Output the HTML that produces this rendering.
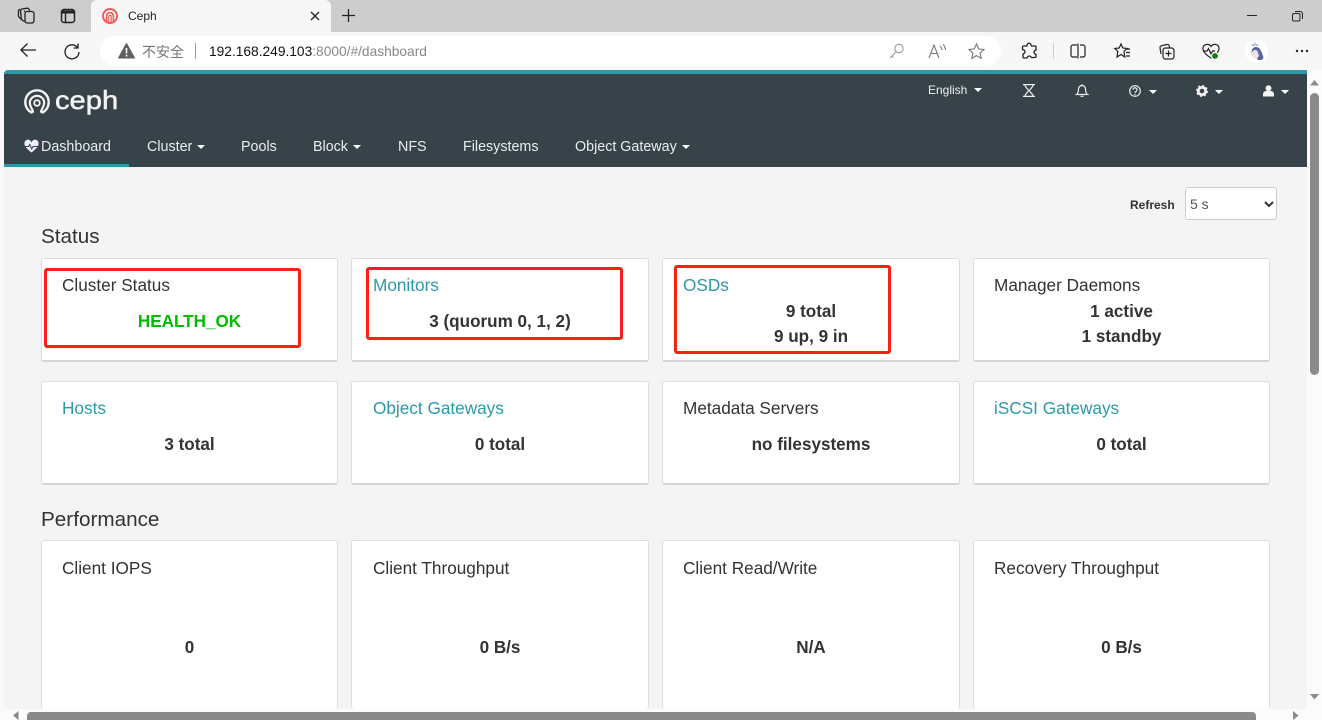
<!DOCTYPE html>
<html><head><meta charset="utf-8"><title>Ceph</title>
<style>
html,body{margin:0;padding:0;width:1322px;height:720px;overflow:hidden;background:#f9f9f9;font-family:"Liberation Sans","Noto Sans CJK SC",sans-serif;color:#333}
.a{position:absolute;white-space:nowrap}
svg{position:absolute;overflow:visible}
.card{position:absolute;width:295px;height:101px;background:#fff;border:1px solid #ddd;border-bottom:2px solid #d4d4d4;border-radius:3px;box-sizing:content-box}
.w{width:296px}
.t{position:absolute;font-size:17.2px;line-height:20px;white-space:nowrap;color:#333}
.l{color:#2b99a8}
.v{position:absolute;left:0;right:0;text-align:center;font-size:17.1px;font-weight:bold;line-height:20px;color:#333}
.nav{position:absolute;top:139px;font-size:14.3px;line-height:16px;color:#e8eef0;white-space:nowrap}
.car{display:inline-block;width:0;height:0;border-left:4px solid transparent;border-right:4px solid transparent;border-top:4px solid #fff;vertical-align:2px;margin-left:5px}
.red{position:absolute;border:3px solid #fb1f14;border-radius:3px;box-sizing:border-box}
</style></head><body>
<!-- browser chrome -->
<div class="a" style="left:0;top:0;width:1322px;height:32px;background:#cdcdcd"></div>
<div class="a" style="left:91px;top:0;width:240px;height:32px;background:#f7f7f7;border-radius:6px 6px 0 0"></div>
<div class="a" style="left:0;top:32px;width:1322px;height:38px;background:#f7f7f7"></div>
<svg style="left:0;top:0" width="91" height="32" fill="none" stroke="#222" stroke-width="1.3">
<rect x="25" y="11.500" width="9" height="11.500" rx="2.200"/><path d="M25 11.500l-1-.8M24.500 21.500l-2-1.200a2 2 0 0 1-1.200-1.800L20.500 11a2 2 0 0 1 1.500-2l5-.8a2 2 0 0 1 2 1l.8 1.500"/><path d="M21 19l-2-1.800a2 2 0 0 1-.6-1.700L18.500 11a2 2 0 0 1 1.500-1.800"/>
<rect x="61.500" y="9.500" width="13" height="13" rx="2.500" stroke-width="1.500"/><path d="M62 11h12v2H62z" fill="#222" stroke-width="1"/><path d="M65.500 13v9" stroke-width="1.400"/></svg>
<svg style="left:102px;top:8px" width="16" height="16" fill="none" stroke="#ef5c55"><circle cx="8" cy="8" r="7" stroke-width="2"/><path d="M4.600 14V8a3.400 3.400 0 0 1 6.800 0v6" stroke-width="1.600"/><path d="M6.800 14V8.500a1.200 1.200 0 0 1 2.400 0V14" stroke-width="1.200"/></svg>
<div class="a" style="left:128px;top:9px;font-size:12px;line-height:15px;color:#222">Ceph</div>
<svg style="left:310px;top:11px" width="10" height="10" stroke="#222" stroke-width="1.300"><path d="M1 1l8 8M9 1l-8 8"/></svg>
<svg style="left:341px;top:8px" width="15" height="15" stroke="#222" stroke-width="1.300"><path d="M7.500 1v13M1 7.500h13"/></svg>
<svg style="left:1246px;top:15px" width="12" height="2" stroke="#222"><path d="M1 .5h10"/></svg>
<svg style="left:1292px;top:11px" width="11" height="11" fill="none" stroke="#222"><rect x=".5" y="2.500" width="7.500" height="7.500" rx="1.500"/><path d="M3 .5h5a2.500 2.500 0 0 1 2.500 2.500v5"/></svg>
<svg style="left:19px;top:42px" width="18" height="16" fill="none" stroke="#222" stroke-width="1.300"><path d="M17 8H2M8.500 1.500L2 8l6.500 6.500"/></svg>
<svg style="left:64px;top:43px" width="16" height="16" fill="none" stroke="#222" stroke-width="1.300"><path d="M13.500 4.500A7 7 0 1 0 15 9"/><path d="M14 .5v4.500H9.500"/></svg>
<div class="a" style="left:100px;top:36px;width:901px;height:30px;background:#fff;border-radius:15px"></div>
<svg style="left:118px;top:43px" width="17" height="16"><path d="M8.500 .5L16.500 15H.5z" fill="#5f5f5f" stroke="#5f5f5f" stroke-linejoin="round"/><path d="M8.500 5v5.500M8.500 11.700v1.800" stroke="#fff" stroke-width="1.600"/></svg>
<div class="a" style="left:142px;top:44px;font-size:14px;line-height:16px;color:#777">不安全</div>
<div class="a" style="left:195px;top:43px;width:1px;height:16px;background:#999"></div>
<div class="a" style="left:209px;top:44px;font-size:13.750px;line-height:16px;color:#888"><span style="color:#111">192.168.249.103</span>:8000/#/dashboard</div>
<svg style="left:888px;top:43px" width="17" height="16" fill="none" stroke="#999" stroke-width="1.100"><circle cx="11" cy="5.500" r="4.200"/><path d="M8 9L2 15M4 13l1.500 1.500"/></svg>
<svg style="left:928px;top:43px" width="19" height="16" fill="none" stroke="#777" stroke-width="1.100"><path d="M1 15L6 2l5 13M3 10.500h6M12 3a5 5 0 0 1 1.800 4M15 1.500a8 8 0 0 1 2.500 5.500"/></svg>
<svg style="left:968px;top:43px" width="17" height="16" fill="none" stroke="#777" stroke-width="1.100"><path d="M8.500 1l2.200 4.900 5.300.6-3.900 3.600 1.100 5.200-4.700-2.700-4.700 2.700 1.100-5.200L1 6.500l5.300-.6z"/></svg>
<svg style="left:1021px;top:43px" width="17" height="16" fill="none" stroke="#222" stroke-width="1.300"><path d="M6 2.500a2 2 0 0 1 4-.5l.5 1h3.500a1 1 0 0 1 1 1v3l-1 .5a2 2 0 0 0 0 3.500l1 .5v2a1 1 0 0 1-1 1H10.500l-.5-.5a2 2 0 0 0-3.500 0L6 15H3a1 1 0 0 1-1-1v-3l1-.5a2 2 0 0 0 0-3.500L1.500 6.500V4a1 1 0 0 1 1-1H6z"/></svg>
<div class="a" style="left:1053px;top:43px;width:1px;height:16px;background:#ccc"></div>
<svg style="left:1070px;top:43px" width="16" height="16" fill="none" stroke="#222" stroke-width="1.200"><path d="M7 2H3a2 2 0 0 0-2 2v8a2 2 0 0 0 2 2h4M10 2h3a2 2 0 0 1 2 2v8a2 2 0 0 1-2 2h-3M8 .5v15"/></svg>
<svg style="left:1114px;top:43px" width="17" height="16" fill="none" stroke="#222" stroke-width="1.200"><path d="M7 1l1.800 4 4.200.5-3 3 .8 5.500L7 11.500 3 14l.8-5.500-3-3L5.200 5zM12 6h4M12 9.500h4M12 13h4"/></svg>
<svg style="left:1158px;top:43px" width="17" height="17" fill="none" stroke="#222" stroke-width="1.200"><path d="M3 11l-1-6a2 2 0 0 1 1.600-2.300L9 1.500a2 2 0 0 1 2.300 1.500L11.500 4.500"/><rect x="5" y="5" width="11" height="11" rx="2.500" fill="#f7f7f7"/><path d="M10.500 7.500v6M7.500 10.500h6"/></svg>
<svg style="left:1202px;top:43px" width="18" height="17" fill="none" stroke="#222" stroke-width="1.200"><path d="M9 3.500C7 0 1 1 1 5.500 1 9 5 12.500 9 15c4-2.500 8-6 8-9.500C17 1 11 0 9 3.500z"/><path d="M1 8h4l1.500-2.500L9 11l1.500-3H13"/><circle cx="13" cy="13" r="3.500" fill="#107c10" stroke="#f7f7f7"/></svg>
<div class="a" style="left:1245px;top:40px;width:23px;height:23px;border-radius:50%;background:#fff"></div>
<svg style="left:1248px;top:42px" width="17" height="19"><path d="M4 13.500C3 9 4 5 8 5s6 5 7.500 11l-2 2H10l-2-4z" fill="#56659c"/><ellipse cx="7.500" cy="12" rx="3.800" ry="4.500" fill="#f1e3e4"/><path d="M4 2l2 2M7 1v2.500M9.500 2L8.500 4" stroke="#7a88b5"/><path d="M5 8.500c1-1.500 4-1.500 5 .5l1 4" stroke="#56659c" fill="none"/></svg>
<svg style="left:1295px;top:49px" width="14" height="4" fill="#222"><circle cx="2" cy="2" r="1.200"/><circle cx="7" cy="2" r="1.200"/><circle cx="12" cy="2" r="1.200"/></svg>

<!-- page -->
<div class="a" style="left:4px;top:74px;width:1303px;height:635px;background:#f4f4f4"></div>
<div class="a" style="left:4px;top:70px;width:1303px;height:97px;background:#374249;border-top:4px solid #2b99a8;box-sizing:border-box;border-radius:4px 0 0 0"></div>
<div class="a" style="left:4px;top:164px;width:125px;height:3px;background:#2b99a8"></div>
<svg style="left:24px;top:89px" width="26" height="25" fill="none" stroke="#f4f4f4" stroke-linecap="round">
<path d="M7.500 23.500C3.500 21.500 1.300 17.500 1.300 13a11.700 11.700 0 0 1 23.400 0c0 4.500-2.200 8.500-6.200 10.500" stroke-width="2.400"/>
<path d="M9 22.800c0-2-2.800-4.500-3.200-8.800a7.200 7.200 0 0 1 14.400 0c-.4 4.300-3.200 6.800-3.200 8.800" stroke-width="2.200"/>
<circle cx="13" cy="14" r="2.800" stroke-width="1.800"/></svg>
<div class="a" style="left:55px;top:84px;font-size:26px;line-height:32px;color:#f4f4f4;-webkit-text-stroke:.5px #f4f4f4;transform:scaleX(1.12);transform-origin:left">ceph</div>

<svg style="left:24px;top:140px" width="15" height="13"><path d="M7.500 12.500C3 9 .5 6.500.5 4A3.400 3.400 0 0 1 7.500 2.500 3.400 3.400 0 0 1 14.500 4C14.500 6.500 12 9 7.500 12.500z" fill="#eef"/><path d="M0 6.500h4.500l1.200-2 2 4.500 1.500-2.500H15" fill="none" stroke="#374249" stroke-width="1"/></svg>
<div class="nav" style="left:41px">Dashboard</div>
<div class="nav" style="left:147px">Cluster<span class="car"></span></div>
<div class="nav" style="left:241px">Pools</div>
<div class="nav" style="left:313px">Block<span class="car"></span></div>
<div class="nav" style="left:398px">NFS</div>
<div class="nav" style="left:463px">Filesystems</div>
<div class="nav" style="left:575px">Object Gateway<span class="car"></span></div>

<div class="a" style="left:928px;top:83px;font-size:12px;line-height:15px;color:#f0f0f0">English<span class="car" style="margin-left:7px"></span></div>
<svg style="left:1023px;top:84px" width="12" height="13" fill="none" stroke="#f0f0f0" stroke-width="1.200"><path d="M0 .6h12M0 12.400h12M2 .6c0 3 3 4 3.500 6C5 8.500 2 9.500 2 12.400M10 .6c0 3-3 4-3.500 6 .5 2 3.500 3 3.500 5.800"/></svg>
<svg style="left:1076px;top:84px" width="12" height="13" fill="none" stroke="#f0f0f0" stroke-width="1.200"><path d="M.5 10.500c1.500-1 2-2.500 2-5.500a3.500 3.500 0 0 1 7 0c0 3 .5 4.500 2 5.500z"/><path d="M4.500 12.300h3M6 .2v1"/></svg>
<svg style="left:1129px;top:85px" width="12" height="12" fill="none" stroke="#f0f0f0" stroke-width="1.200"><circle cx="6" cy="6" r="5.300"/><path d="M4 4.700a2 2 0 1 1 3 1.800c-.7.400-1 .8-1 1.500M6 9v1.200"/></svg>
<span class="car a" style="left:1149px;top:90px;margin:0"></span>
<svg style="left:1196px;top:85px" width="12" height="12"><circle cx="6" cy="6" r="3.700" fill="none" stroke="#f0f0f0" stroke-width="2.800"/><circle cx="6" cy="6" r="5.200" fill="none" stroke="#f0f0f0" stroke-width="1.600" stroke-dasharray="2 2.080"/></svg>
<span class="car a" style="left:1215px;top:90px;margin:0"></span>
<svg style="left:1263px;top:85px" width="11" height="12" fill="#f4f4f4"><circle cx="5.500" cy="3.200" r="3"/><path d="M0 11.500V9a3 3 0 0 1 3-3h5a3 3 0 0 1 3 3v2.500z"/></svg>
<span class="car a" style="left:1281px;top:90px;margin:0"></span>

<div class="a" style="left:1130px;top:198px;font-size:12px;line-height:15px;font-weight:bold;color:#333">Refresh</div>
<div class="a" style="left:1185px;top:187px;width:92px;height:33px;background:#fff;border:1px solid #ccc;border-radius:3px;box-sizing:border-box"></div>
<div class="a" style="left:1190px;top:196px;font-size:14px;line-height:16px;color:#555">5 s</div>
<svg style="left:1264px;top:201px" width="10" height="7" fill="none" stroke="#333" stroke-width="2"><path d="M1 1l4 4 4-4"/></svg>

<div class="a" style="left:41px;top:225px;font-size:20.700px;line-height:24px;color:#333">Status</div>
<div class="a" style="left:41px;top:508px;font-size:20.700px;line-height:24px;color:#333">Performance</div>

<div class="card" style="left:41px;top:258px"><div class="t" style="left:20px;top:16px">Cluster Status</div><div class="v" style="top:53px;color:#00bb00">HEALTH_OK</div></div>
<div class="card w" style="left:351px;top:258px"><div class="t l" style="left:21px;top:16px">Monitors</div><div class="v" style="top:53px">3 (quorum 0, 1, 2)</div></div>
<div class="card w" style="left:662px;top:258px"><div class="t l" style="left:20px;top:16px">OSDs</div><div class="v" style="top:43px">9 total</div><div class="v" style="top:68px">9 up, 9 in</div></div>
<div class="card" style="left:973px;top:258px"><div class="t" style="left:20px;top:16px">Manager Daemons</div><div class="v" style="top:43px">1 active</div><div class="v" style="top:68px">1 standby</div></div>

<div class="card" style="left:41px;top:381px"><div class="t l" style="left:20px;top:16px">Hosts</div><div class="v" style="top:53px">3 total</div></div>
<div class="card w" style="left:351px;top:381px"><div class="t l" style="left:21px;top:16px">Object Gateways</div><div class="v" style="top:53px">0 total</div></div>
<div class="card w" style="left:662px;top:381px"><div class="t" style="left:20px;top:16px">Metadata Servers</div><div class="v" style="top:53px">no filesystems</div></div>
<div class="card" style="left:973px;top:381px"><div class="t l" style="left:20px;top:16px">iSCSI Gateways</div><div class="v" style="top:53px">0 total</div></div>

<div class="card" style="left:41px;top:540px;height:168px;border-bottom:0"><div class="t" style="left:20px;top:17px">Client IOPS</div><div class="v" style="top:97px">0</div></div>
<div class="card w" style="left:351px;top:540px;height:168px;border-bottom:0"><div class="t" style="left:21px;top:17px">Client Throughput</div><div class="v" style="top:97px">0 B/s</div></div>
<div class="card w" style="left:662px;top:540px;height:168px;border-bottom:0"><div class="t" style="left:20px;top:17px">Client Read/Write</div><div class="v" style="top:97px">N/A</div></div>
<div class="card" style="left:973px;top:540px;height:168px;border-bottom:0"><div class="t" style="left:20px;top:17px">Recovery Throughput</div><div class="v" style="top:97px">0 B/s</div></div>

<div class="red" style="left:44px;top:268px;width:257px;height:80px"></div>
<div class="red" style="left:366px;top:267px;width:257px;height:73px"></div>
<div class="red" style="left:674px;top:265px;width:217px;height:89px"></div>

<!-- scrollbars -->
<div class="a" style="left:1307px;top:70px;width:15px;height:639px;background:#fbfbfb"></div>
<svg style="left:1309px;top:80px" width="11" height="6" fill="#8a8a8a"><path d="M5.500 0L10 5.500H1z"/></svg>
<div class="a" style="left:1310px;top:93px;width:9px;height:282px;background:#8a8a8a;border-radius:5px"></div>
<svg style="left:1309px;top:694px" width="11" height="6" fill="#8a8a8a"><path d="M5.500 5.500L10 0H1z"/></svg>
<div class="a" style="left:0;top:709px;width:1322px;height:11px;background:#fbfbfb"></div>
<svg style="left:13px;top:711px" width="6" height="9" fill="#8a8a8a"><path d="M0 4.500L5.500 0v9z"/></svg>
<div class="a" style="left:27px;top:712px;width:1229px;height:8px;background:#8a8a8a;border-radius:4px 4px 0 0"></div>
<svg style="left:1293px;top:711px" width="6" height="9" fill="#8a8a8a"><path d="M5.500 4.500L0 0v9z"/></svg>
</body></html>
